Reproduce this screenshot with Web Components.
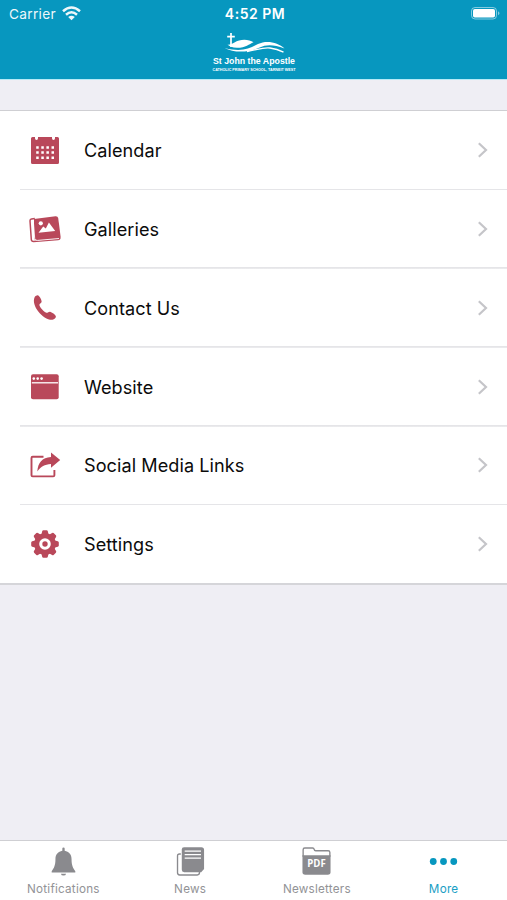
<!DOCTYPE html>
<html lang="en">
<head>
<meta charset="utf-8">
<title>More</title>
<style>
html,body{margin:0;height:100%}
body{font-family:Inter,"Liberation Sans",sans-serif;background:#efeef4;overflow:hidden}
</style>
</head>
<body>
<school-app></school-app>
<script>
const define=(name,html,setup)=>{
  const t=document.createElement('template');
  t.innerHTML=html;
  customElements.define(name,class extends HTMLElement{
    static get observedAttributes(){ return ['name','icon']; }
    constructor(){
      super();
      this.attachShadow({mode:'open'}).append(t.content.cloneNode(true));
    }
    connectedCallback(){ if(setup) setup(this,this.shadowRoot); }
    attributeChangedCallback(){ if(setup) setup(this,this.shadowRoot); }
  });
};

const gearTeeth=[0,45,90,135,180,225,270,315].map(a=>`<path transform="rotate(${a} 16 16)" d="M14.400 2.200H17.600Q18.600 2.200 18.800 3.200L20 8H12L13.200 3.200Q13.400 2.200 14.400 2.200Z"/>`).join('');

const icons={
  calendar:`<path fill="currentColor" d="M3.500 3H6V4.300Q6 5.900 7.500 5.900T9 4.300V3H23V4.300Q23 5.900 24.500 5.900T26 4.300V3H28.500Q30 3 30 4.500V28.500Q30 30 28.500 30H3.500Q2 30 2 28.500V4.500Q2 3 3.500 3Z"/><path stroke="#fff" stroke-width="2.500" stroke-dasharray="2.500 2.600" d="M7.200 13.400H25.200M7.200 18.600H25.200M7.200 23.800H25.200"/>`,
  gallery:`<path fill="none" stroke="currentColor" stroke-width="1.500" stroke-linejoin="round" d="M5.800 5.500L2.500 6Q1 6.300 1 7.800L2.300 26.500Q2.500 28.500 4.500 28.500L29 26.500Q31 26.300 30.800 24.500"/><path fill="currentColor" d="M5 6L26.500 3.200Q28.800 3 29.200 5L31.600 23.500Q31.800 25.600 29.800 26L8.500 27.500Q5.200 27.700 5 24Z"/><path fill="none" stroke="#fff" stroke-width=".9" d="M4.300 8L5.700 25.500Q6 27.600 8.500 27.400L30 25.500"/><circle cx="11.800" cy="10.300" r="2.100" fill="#fff"/><path fill="#fff" d="M9.500 19.800L14.200 13.500L16.800 15.600L19.900 9.400L26.200 17.900Z"/>`,
  phone:`<path fill="currentColor" d="M5.700 5C6.600 3.800 8.200 2.900 9.300 3.400C10.800 4.200 13 8.500 12.600 9.900C12.300 11 10.300 11.500 10.400 12.900C10.700 15 14.800 19.800 17.400 20.700C18.700 21 19.700 19.500 21 19.700C22.700 20 26.600 22.800 26.900 24.300C27.100 25.800 25.200 27.600 23.500 27.800C14.500 28.600 1.500 13.600 5.700 5Z"/>`,
  website:`<rect x="2" y="3.200" width="27.700" height="25" rx="2" fill="currentColor"/><path stroke="#fff" stroke-width="1.300" d="M2.800 11.800H29"/><g fill="#fff"><circle cx="4.800" cy="7.600" r="1.300"/><circle cx="8.700" cy="7.600" r="1.300"/><circle cx="12.600" cy="7.600" r="1.300"/></g>`,
  share:`<path fill="none" stroke="currentColor" stroke-width="1.900" stroke-linejoin="round" d="M14.500 7.700H3.700Q2.500 7.700 2.500 8.900V26.200Q2.500 27.400 3.700 27.400H24.200Q25.400 27.400 25.400 26.200V21"/><path fill="currentColor" d="M8.300 22.500C9 13.500 13 8.600 22 7.900V3.400L31.200 10.900L22 18.800V14.900C15.500 15.300 12 17.500 8.300 22.500Z"/>`,
  gear:`<circle cx="16" cy="16" r="8.300" fill="none" stroke="currentColor" stroke-width="5"/><g fill="currentColor">${gearTeeth}</g><circle cx="16" cy="16" r="2.700" fill="currentColor"/>`,
  bell:`<path fill="currentColor" d="M16 1.500Q17.200 1.500 17.200 2.700V4.900C21.500 5.700 24.300 8.600 24.300 13.300C24.300 20 25.800 22.500 28.200 26V27.300H3.800V26C6.200 22.500 7.700 20 7.700 13.300C7.700 8.600 10.500 5.700 14.800 4.900V2.700Q14.800 1.500 16 1.500ZM13.300 28.600H18.700Q18.300 30.500 16 30.500T13.300 28.600Z"/>`,
  news:`<path fill="none" stroke="currentColor" stroke-width="1.400" d="M6 8.300H4.600Q2.600 8.300 2.600 10.300V27.700Q2.600 29.900 4.800 29.900H23Q25.300 29.900 25.300 27.200V26.500"/><path fill="currentColor" d="M9.300 1.200H27.200Q30 1.200 30 4V23.800L27 27H9.500Q7 27 7 24.500V3.500Q7 1.200 9.300 1.200Z"/><path stroke="#fff" stroke-width="1.300" d="M10 5.200H26.800M10 8.900H26.800M10 12.600H26.800"/>`,
  pdf:`<path fill="none" stroke="currentColor" stroke-width="1.400" d="M2.200 11V3.800Q2.200 2.100 3.900 2.100H12Q13.300 2.100 13.600 3.500Q13.800 4.900 15.200 4.900H28Q29.800 4.900 29.800 6.700V11"/><path fill="currentColor" d="M1.500 9.500H30.500V26.800Q30.500 29.600 27.700 29.600H4.300Q1.500 29.600 1.500 26.800Z"/><text x="16" y="21.800" text-anchor="middle" font-family="Open Sans,sans-serif" font-size="10" font-weight="700" fill="#fff" textLength="19" lengthAdjust="spacingAndGlyphs">PDF</text>`,
  more:`<g fill="currentColor"><circle cx="5.400" cy="16" r="3.500"/><circle cx="16" cy="16" r="3.500"/><circle cx="26.600" cy="16" r="3.500"/></g>`
};

define('app-icon',`<style>:host{display:block;width:32px;height:32px;flex:none}svg{display:block;width:100%;height:100%;overflow:visible}</style><svg viewBox="0 0 32 32"></svg>`,
  (el,root)=>{root.querySelector('svg').innerHTML=icons[el.getAttribute('name')]||'';});

define('status-bar',`<style>
:host{display:grid;grid-template-columns:1fr auto 1fr;align-items:center;height:28px;padding:0 6px 0 9px;color:#fff;box-sizing:border-box}
.left{display:flex;align-items:center;gap:6px;font-size:13.700px;letter-spacing:.3px;opacity:.93}
.left svg{margin-top:-2px}
.time{font-size:14px;font-weight:600;letter-spacing:.5px;padding-bottom:2px}
.battery{justify-self:end;display:block;margin-top:-2px}
.wifi{display:block}
</style>
<div class="left"><span>Carrier</span><svg class="wifi" width="19" height="15" viewBox="0 0 19 15"><g fill="none" stroke="#fff" stroke-width="2.500"><path d="M1 5.200Q9.500 -2.300 18 5.200"/><path d="M4 8.700Q9.500 3.800 15 8.700"/></g><path fill="#fff" d="M6.200 11Q9.500 8.300 12.800 11L9.500 14.300Z"/></svg></div>
<div class="time">4:52 PM</div>
<svg class="battery" width="31" height="14" viewBox="0 0 31 14"><rect x="1.500" y="1.500" width="25" height="11.500" rx="3.500" fill="none" stroke="#fff" stroke-opacity=".5"/><rect x="3" y="3" width="22" height="8.500" rx="1.800" fill="#fff"/><path fill="#fff" fill-opacity=".5" d="M28 5.200Q31 7.200 28 9.300Z"/></svg>`);

define('school-logo',`<style>:host{display:block;width:84px;height:42px}svg{display:block;overflow:visible}text{font-family:"Liberation Sans",sans-serif;fill:#fff}</style>
<svg width="84" height="42" viewBox="0 0 84 42">
<path fill="none" stroke="#fff" stroke-width="1.700" d="M19 1V15M15.200 4.700H22.800"/>
<path fill="#fff" d="M15.500 12.500Q18.500 13.200 22.500 10.500C28 6.600 37 7 41.500 10.200C37 12 34 15.800 25 15.800Q18 15.500 15.500 12.500Z"/>
<path fill="#fff" d="M12.500 16C30 20.500 37 16.500 46 12C55 7.800 66 10.500 72.500 16.500C61 12.500 55 12.300 47 15.800C36 20.700 22 21 12.500 16Z"/>
<path fill="none" stroke="#fff" stroke-width="1.400" d="M35 19.500C46 17.500 51 15.200 58 16Q65 17 71.500 20.200"/>
<text x="1" y="32" font-size="9.300" font-weight="700" textLength="82" lengthAdjust="spacingAndGlyphs">St John the Apostle</text>
<text x=".5" y="38.800" font-size="4.300" font-weight="700" textLength="83" lengthAdjust="spacingAndGlyphs">CATHOLIC PRIMARY SCHOOL, TARNEIT WEST</text>
</svg>`);

define('app-header',`<style>
:host{display:flex;flex-direction:column;height:79px;background:#0797bf;border-bottom:1px solid #b5eaf7;box-sizing:content-box;align-items:center}
status-bar{align-self:stretch}
school-logo{margin-top:4px}
</style><status-bar></status-bar><school-logo></school-logo>`);

define('menu-row',`<style>
:host{display:flex;align-items:center;height:78.750px;box-sizing:border-box;padding:0 18.500px 1.400px 29px;color:#b9485a;background:linear-gradient(#e5e5e8,#e5e5e8) 20px 100%/100% 1.800px no-repeat}
:host(:last-of-type){background:none;height:77.500px;padding-bottom:0}
.label{flex:1;margin-left:23px;color:#0b0b0b;font-size:18.100px;letter-spacing:.07px;line-height:24px}
.chev{display:block}
</style><app-icon></app-icon><span class="label"><slot></slot></span><svg class="chev" width="13" height="18" viewBox="0 0 13 18"><path fill="none" stroke="#c5c5c9" stroke-width="2.200" d="M2.800 2.200L10 9L2.800 15.800"/></svg>`,
 (el,root)=>root.querySelector('app-icon').setAttribute('name',el.getAttribute('icon')));

define('menu-list',`<style>:host{display:block;background:#fff;border-top:1px solid #cfcfd3;border-bottom:2px solid #d5d5d9;margin-top:30px;padding-top:.6px}</style><slot></slot>`);

define('tab-item',`<style>
:host{display:flex;flex-direction:column;align-items:center;flex:1 1 0;color:#8a8a8e;padding-top:5px}
:host([active]){color:#0797bf}
app-icon{width:31px;height:31px}
.label{font-size:11.700px;line-height:16px;margin-top:4px;letter-spacing:.23px;opacity:.92;white-space:nowrap}
</style><app-icon></app-icon><span class="label"><slot></slot></span>`,
 (el,root)=>root.querySelector('app-icon').setAttribute('name',el.getAttribute('icon')));

define('tab-bar',`<style>:host{display:flex;height:60px;box-sizing:border-box;border-top:1px solid #cfcfd3;background:#fff;margin-top:auto}</style><slot></slot>`);

define('school-app',`<style>:host{display:flex;flex-direction:column;width:507px;height:900px;background:#efeef4}</style>
<app-header></app-header>
<menu-list>
<menu-row icon="calendar">Calendar</menu-row>
<menu-row icon="gallery">Galleries</menu-row>
<menu-row icon="phone">Contact Us</menu-row>
<menu-row icon="website">Website</menu-row>
<menu-row icon="share">Social Media Links</menu-row>
<menu-row icon="gear">Settings</menu-row>
</menu-list>
<tab-bar>
<tab-item icon="bell">Notifications</tab-item>
<tab-item icon="news">News</tab-item>
<tab-item icon="pdf">Newsletters</tab-item>
<tab-item icon="more" active>More</tab-item>
</tab-bar>`);
</script>
</body>
</html>
